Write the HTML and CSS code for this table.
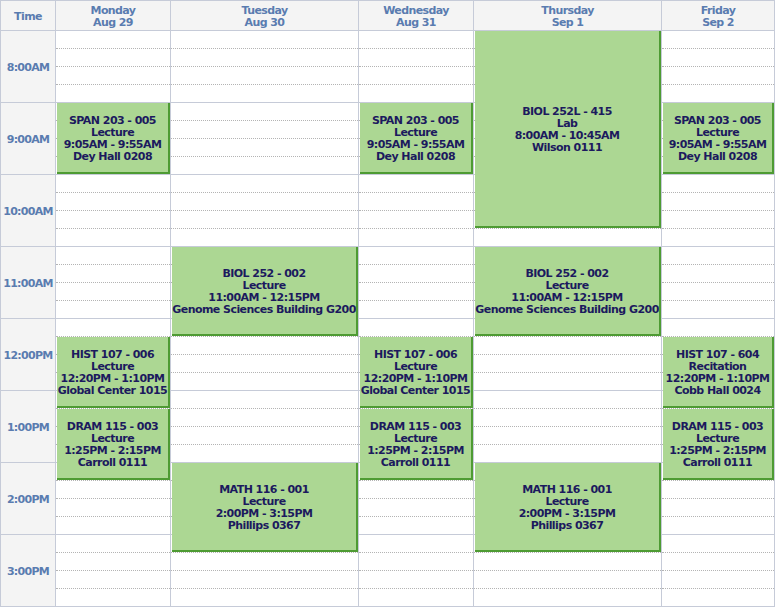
FILE: index.html
```html
<!DOCTYPE html>
<html>
<head>
<meta charset="utf-8">
<link rel="stylesheet" href="styles.css">
</head>
<body>
<div class="cal">
  <div class="hd time-hd">Time</div>
  <div class="hd"><span>Monday</span><span>Aug 29</span></div>
  <div class="hd"><span>Tuesday</span><span>Aug 30</span></div>
  <div class="hd"><span>Wednesday</span><span>Aug 31</span></div>
  <div class="hd"><span>Thursday</span><span>Sep 1</span></div>
  <div class="hd"><span>Friday</span><span>Sep 2</span></div>

  <div class="times">
    <div class="hour">8:00AM</div>
    <div class="hour">9:00AM</div>
    <div class="hour">10:00AM</div>
    <div class="hour">11:00AM</div>
    <div class="hour">12:00PM</div>
    <div class="hour">1:00PM</div>
    <div class="hour">2:00PM</div>
    <div class="hour">3:00PM</div>
  </div>

  <!-- Monday -->
  <div class="day">
    <div class="lines"><div></div><div></div><div></div><div></div><div></div><div></div><div></div><div></div><div></div><div></div><div></div><div></div><div></div><div></div><div></div><div></div><div></div><div></div><div></div><div></div><div></div><div></div><div></div><div></div><div></div><div></div><div></div><div></div><div></div><div></div><div></div><div></div></div>
    <div class="events">
      <div class="ev" style="grid-row: 5 / span 4"><span>SPAN 203 - 005</span><span>Lecture</span><span>9:05AM - 9:55AM</span><span>Dey Hall 0208</span></div>
      <div class="ev" style="grid-row: 18 / span 4"><span>HIST 107 - 006</span><span>Lecture</span><span>12:20PM - 1:10PM</span><span>Global Center 1015</span></div>
      <div class="ev" style="grid-row: 22 / span 4"><span>DRAM 115 - 003</span><span>Lecture</span><span>1:25PM - 2:15PM</span><span>Carroll 0111</span></div>
    </div>
  </div>

  <!-- Tuesday -->
  <div class="day">
    <div class="lines"><div></div><div></div><div></div><div></div><div></div><div></div><div></div><div></div><div></div><div></div><div></div><div></div><div></div><div></div><div></div><div></div><div></div><div></div><div></div><div></div><div></div><div></div><div></div><div></div><div></div><div></div><div></div><div></div><div></div><div></div><div></div><div></div></div>
    <div class="events">
      <div class="ev" style="grid-row: 13 / span 5"><span>BIOL 252 - 002</span><span>Lecture</span><span>11:00AM - 12:15PM</span><span>Genome Sciences Building G200</span></div>
      <div class="ev" style="grid-row: 25 / span 5"><span>MATH 116 - 001</span><span>Lecture</span><span>2:00PM - 3:15PM</span><span>Phillips 0367</span></div>
    </div>
  </div>

  <!-- Wednesday -->
  <div class="day">
    <div class="lines"><div></div><div></div><div></div><div></div><div></div><div></div><div></div><div></div><div></div><div></div><div></div><div></div><div></div><div></div><div></div><div></div><div></div><div></div><div></div><div></div><div></div><div></div><div></div><div></div><div></div><div></div><div></div><div></div><div></div><div></div><div></div><div></div></div>
    <div class="events">
      <div class="ev" style="grid-row: 5 / span 4"><span>SPAN 203 - 005</span><span>Lecture</span><span>9:05AM - 9:55AM</span><span>Dey Hall 0208</span></div>
      <div class="ev" style="grid-row: 18 / span 4"><span>HIST 107 - 006</span><span>Lecture</span><span>12:20PM - 1:10PM</span><span>Global Center 1015</span></div>
      <div class="ev" style="grid-row: 22 / span 4"><span>DRAM 115 - 003</span><span>Lecture</span><span>1:25PM - 2:15PM</span><span>Carroll 0111</span></div>
    </div>
  </div>

  <!-- Thursday -->
  <div class="day">
    <div class="lines"><div></div><div></div><div></div><div></div><div></div><div></div><div></div><div></div><div></div><div></div><div></div><div></div><div></div><div></div><div></div><div></div><div></div><div></div><div></div><div></div><div></div><div></div><div></div><div></div><div></div><div></div><div></div><div></div><div></div><div></div><div></div><div></div></div>
    <div class="events">
      <div class="ev" style="grid-row: 1 / span 11"><span>BIOL 252L - 415</span><span>Lab</span><span>8:00AM - 10:45AM</span><span>Wilson 0111</span></div>
      <div class="ev" style="grid-row: 13 / span 5"><span>BIOL 252 - 002</span><span>Lecture</span><span>11:00AM - 12:15PM</span><span>Genome Sciences Building G200</span></div>
      <div class="ev" style="grid-row: 25 / span 5"><span>MATH 116 - 001</span><span>Lecture</span><span>2:00PM - 3:15PM</span><span>Phillips 0367</span></div>
    </div>
  </div>

  <!-- Friday -->
  <div class="day">
    <div class="lines"><div></div><div></div><div></div><div></div><div></div><div></div><div></div><div></div><div></div><div></div><div></div><div></div><div></div><div></div><div></div><div></div><div></div><div></div><div></div><div></div><div></div><div></div><div></div><div></div><div></div><div></div><div></div><div></div><div></div><div></div><div></div><div></div></div>
    <div class="events">
      <div class="ev" style="grid-row: 5 / span 4"><span>SPAN 203 - 005</span><span>Lecture</span><span>9:05AM - 9:55AM</span><span>Dey Hall 0208</span></div>
      <div class="ev" style="grid-row: 18 / span 4"><span>HIST 107 - 604</span><span>Recitation</span><span>12:20PM - 1:10PM</span><span>Cobb Hall 0024</span></div>
      <div class="ev" style="grid-row: 22 / span 4"><span>DRAM 115 - 003</span><span>Lecture</span><span>1:25PM - 2:15PM</span><span>Carroll 0111</span></div>
    </div>
  </div>
</div>
</body>
</html>
```
FILE: styles.css
```css
html, body {
  margin: 0;
  padding: 0;
  background: #ffffff;
}

body {
  font-family: "DejaVu Sans", Verdana, sans-serif;
  font-size: 11px;
  font-weight: bold;
  line-height: 12px;
}

.cal {
  display: grid;
  grid-template-columns: 54px 114px 187px 114px 187px 112px;
  grid-template-rows: 29px auto;
  gap: 1px;
  padding: 1px 1px 0 1px;
  background: #c6cbd8;
  width: 773px;
}

.hd {
  background: #f4f4f4;
  color: #5a7cb0;
  letter-spacing: -0.6px;
  padding-top: 2px;
  box-sizing: border-box;
  display: flex;
  flex-direction: column;
  align-items: center;
  justify-content: center;
  text-align: center;
}

.times {
  background: #f4f4f4;
  display: flex;
  flex-direction: column;
}

.hour {
  height: 71px;
  padding-top: 2px;
  box-sizing: content-box;
  height: 69px;
  border-bottom: 1px solid #c6cbd8;
  color: #5a7cb0;
  letter-spacing: -0.7px;
  white-space: nowrap;
  display: flex;
  align-items: center;
  justify-content: center;
}

.day {
  background: #ffffff;
  display: grid;
  grid-template-columns: minmax(0, 1fr);
  grid-template-rows: auto;
  min-width: 0;
}

.lines, .events {
  grid-area: 1 / 1;
  min-width: 0;
}

.lines > div {
  height: 17px;
  border-bottom: 1px dotted #b4b4b4;
}

.lines > div:nth-child(4n) {
  border-bottom: 1px solid #c6cbd8;
}

.events {
  display: grid;
  grid-template-columns: minmax(0, 1fr);
  grid-template-rows: repeat(32, 18px);
}

.ev {
  grid-column: 1;
  min-width: 0;
  overflow: hidden;
  margin: 0 0 1px 1px;
  padding-top: 3px;
  box-sizing: border-box;
  background: #acd793;
  border-right: 2px solid #4e9b33;
  border-bottom: 2px solid #4e9b33;
  color: #1c1a5e;
  letter-spacing: -0.55px;
  display: flex;
  flex-direction: column;
  align-items: center;
  justify-content: center;
  text-align: center;
  white-space: nowrap;
}
```
